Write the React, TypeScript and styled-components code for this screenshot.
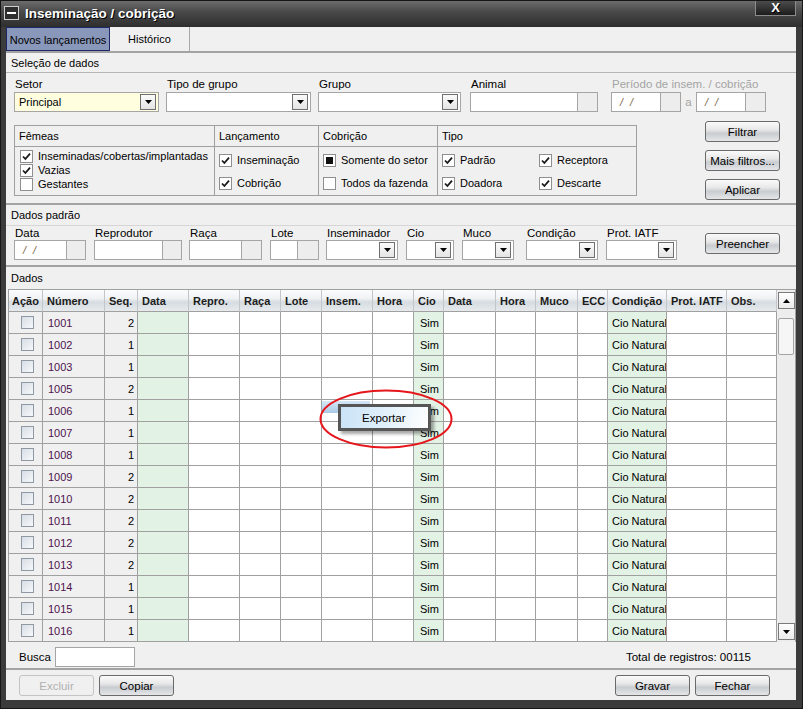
import React from "react";
import styled, { createGlobalStyle, css } from "styled-components";

const GlobalStyle = createGlobalStyle`
  * { box-sizing: border-box; }
  html, body { margin: 0; padding: 0; background: #1e1e1e; }
  body {
    font-family: "Liberation Sans", Arial, sans-serif;
    font-size: 11px;
    color: #000;
  }
`;

const Window = styled.div`
  position: relative;
  width: 803px;
  height: 709px;
  display: flex;
  flex-direction: column;
  border: 1px solid #161616;
  background: #3b3b3b;
  padding-bottom: 8px;
  overflow: hidden;
`;

const TitleBar = styled.div`
  height: 26px;
  flex: none;
  display: flex;
  align-items: flex-start;
  padding-left: 3px;
  background: linear-gradient(180deg, #6c6c6c 0%, #4a4a4a 40%, #2e2e2e 100%);
`;

const MinIcon = styled.div`
  width: 15px;
  height: 14px;
  margin-top: 5px;
  border: 1px solid #cfcfcf;
  background: #2e2e2e;
  display: flex;
  align-items: center;
  justify-content: center;
  &::after {
    content: "";
    width: 9px;
    height: 2px;
    background: #fff;
  }
`;

const Title = styled.div`
  margin-left: 6px;
  margin-top: 5px;
  color: #fff;
  font-size: 13.5px;
  font-weight: bold;
  text-shadow: 1px 1px 0 #000;
`;

const CloseBtn = styled.div`
  margin-left: auto;
  margin-right: 6px;
  width: 41px;
  height: 15px;
  border: 1px solid #8c8c8c;
  border-top: none;
  background: linear-gradient(180deg, #4c4c4c, #1c1c1c);
  color: #fff;
  font-weight: bold;
  font-size: 13px;
  line-height: 14px;
  text-align: center;
  text-shadow: 1px 1px 0 #000;
`;

const Body = styled.div`
  flex: 1;
  margin: 0 6px 0 5px;
  background: #f0f0f0;
  display: flex;
  flex-direction: column;
`;

const TabBar = styled.div`
  height: 26px;
  flex: none;
  display: flex;
  border-bottom: 2px solid #a3a3a3;
`;

const Tab = styled.div<{ $w: number; $active?: boolean }>`
  width: ${(p) => p.$w}px;
  height: 24px;
  display: flex;
  align-items: center;
  justify-content: center;
  ${(p) =>
    p.$active
      ? css`
          background: #8997ba;
          border: 1px solid #1d2868;
          padding-top: 2px;
        `
      : css`
          border-right: 1px solid #a8a8a8;
        `}
`;

const SectionTitle = styled.div<{ $h: number; $line?: string }>`
  height: ${(p) => p.$h}px;
  flex: none;
  display: flex;
  align-items: center;
  padding-left: 5px;
  border-bottom: ${(p) => (p.$line ? `1px solid ${p.$line}` : "none")};
`;

const Separator = styled.div`
  height: 2px;
  flex: none;
  background: #a3a3a3;
`;

const SelPanel = styled.div`
  height: 130px;
  flex: none;
  padding: 4px 16px 0 8px;
  display: flex;
  flex-direction: column;
`;

const FieldRow = styled.div`
  display: flex;
  align-items: flex-start;
`;

const Field = styled.div<{ $w?: number }>`
  width: ${(p) => (p.$w ? `${p.$w}px` : "auto")};
  flex: none;
  display: flex;
  flex-direction: column;
`;

const Label = styled.div<{ $h: number; $disabled?: boolean }>`
  height: ${(p) => p.$h}px;
  line-height: ${(p) => p.$h}px;
  padding-left: 1px;
  font-size: 11.5px;
  color: ${(p) => (p.$disabled ? "#a4a4a4" : "#000")};
`;

const Inline = styled.div`
  display: flex;
  align-items: center;
`;

const Combo = styled.div<{ $w: number; $bg?: string }>`
  width: ${(p) => p.$w}px;
  height: 20px;
  border: 1px solid #a5a5a5;
  background: ${(p) => p.$bg || "#fff"};
  display: flex;
  align-items: center;
  justify-content: space-between;
  padding: 0 1px 0 4px;
`;

const DropBtn = styled.div`
  width: 16px;
  height: 16px;
  border: 1px solid #6f6f6f;
  background: linear-gradient(180deg, #fbfbfb, #e4e4e4);
  display: flex;
  align-items: center;
  justify-content: center;
  margin-right: 1px;
`;

const TextBox = styled.div<{ $w: number }>`
  width: ${(p) => p.$w}px;
  height: 20px;
  border: 1px solid #a5a5a5;
  background: #fff;
  display: flex;
  align-items: center;
  padding-left: 8px;
  color: #7a6448;
  letter-spacing: 2px;
  font-style: italic;
`;

const SideBtn = styled.div<{ $w?: number }>`
  width: ${(p) => p.$w || 20}px;
  height: 20px;
  border: 1px solid #a5a5a5;
  border-left: none;
  background: #ededed;
`;

const ToLabel = styled.div`
  width: 15px;
  text-align: center;
  color: #a4a4a4;
  font-size: 11.5px;
`;

const GroupRow = styled.div`
  display: flex;
  align-items: flex-start;
  margin-top: 9px;
`;

const GroupBox = styled.div`
  margin-top: 4px;
  width: 623px;
  height: 71px;
  border: 1px solid #a0a0a0;
  display: grid;
  grid-template-columns: 200px 104px 119px 1fr;
  grid-template-rows: 21px 1fr;
`;

const GroupHead = styled.div<{ $last?: boolean }>`
  display: flex;
  align-items: center;
  padding-left: 4px;
  border-bottom: 1px solid #a0a0a0;
  border-right: ${(p) => (p.$last ? "none" : "1px solid #a0a0a0")};
`;

const GroupCell = styled.div<{ $gap: number; $top: number; $pad: number; $last?: boolean }>`
  display: flex;
  flex-direction: column;
  gap: ${(p) => p.$gap}px;
  padding: ${(p) => p.$top}px 0 0 ${(p) => p.$pad}px;
  border-right: ${(p) => (p.$last ? "none" : "1px solid #a0a0a0")};
`;

const TipoGrid = styled.div`
  display: grid;
  grid-template-columns: 97px 1fr;
  grid-auto-rows: 13px;
  row-gap: 10px;
  align-content: start;
  padding: 7px 0 0 4px;
`;

const Check = styled.label`
  display: flex;
  align-items: center;
  gap: 5px;
  height: 13px;
  line-height: 13px;
  white-space: nowrap;
`;

const Box = styled.span`
  width: 13px;
  height: 13px;
  flex: none;
  border: 1px solid #8f8f8f;
  background: #fff;
  display: flex;
  align-items: center;
  justify-content: center;
`;

const Dot = styled.span`
  width: 7px;
  height: 7px;
  background: #111;
`;

const SideButtons = styled.div`
  margin-left: auto;
  display: flex;
  flex-direction: column;
  gap: 8px;
`;

const Button = styled.div<{ $disabled?: boolean }>`
  width: 75px;
  height: 21px;
  border: 1px solid ${(p) => (p.$disabled ? "#c4c4c4" : "#6a6a6a")};
  border-radius: 3px;
  display: flex;
  align-items: center;
  justify-content: center;
  font-size: 11.5px;
  ${(p) =>
    p.$disabled
      ? css`
          background: #f0f0f0;
          color: #b0b0b0;
        `
      : css`
          background: linear-gradient(180deg, #fafafa 0%, #e8e8e8 40%, #c9ccd0 60%, #e4e6e8 100%);
          color: #000;
        `}
`;

const DefPanel = styled.div`
  height: 39px;
  flex: none;
  padding: 0 16px 0 8px;
  display: flex;
  align-items: flex-start;
`;

const PushRight = styled.div`
  margin-left: auto;
  margin-top: 7px;
`;

const Table = styled.div`
  position: relative;
  margin-left: 2px;
  width: 788px;
  height: 353px;
  flex: none;
  border-top: 1px solid #a0a0a0;
  border-left: 1px solid #a0a0a0;
  border-right: 1px solid #a0a0a0;
  display: flex;
  overflow: hidden;
`;

const Grid = styled.div`
  width: 768px;
  flex: none;
`;

const Row = styled.div<{ $cols: string }>`
  display: grid;
  grid-template-columns: ${(p) => p.$cols};
  height: 22px;
`;

const HeadCell = styled.div<{ $center?: boolean }>`
  display: flex;
  align-items: center;
  justify-content: ${(p) => (p.$center ? "center" : "flex-start")};
  padding-left: ${(p) => (p.$center ? 0 : 4)}px;
  font-weight: bold;
  color: #1c1c1c;
  border-right: 1px solid #c2c6ca;
  border-bottom: 1px solid #a0a0a0;
  background: linear-gradient(180deg, #fbfcfc 0%, #f0f2f4 40%, #d6dce1 58%, #e6eaed 100%);
  white-space: nowrap;
  overflow: hidden;
`;

const Cell = styled.div<{ $bg: string; $align: string; $pad: number; $color?: string }>`
  display: flex;
  align-items: center;
  justify-content: ${(p) => p.$align};
  padding: 0 ${(p) => (p.$align === "flex-end" ? 3 : 0)}px 0 ${(p) => p.$pad}px;
  background: ${(p) => p.$bg};
  color: ${(p) => p.$color || "#000"};
  border-right: 1px solid #a0a0a0;
  border-bottom: 1px solid #a0a0a0;
  white-space: nowrap;
  overflow: hidden;
`;

const RowCheck = styled.span`
  width: 13px;
  height: 13px;
  border: 1px solid #8e99a4;
  background: linear-gradient(135deg, #d7dee6, #f6f8fa);
`;

const ScrollBar = styled.div`
  width: 18px;
  flex: none;
  background: #ededed;
  display: flex;
  flex-direction: column;
  align-items: center;
  padding: 2px 0 2px 0;
`;

const ScrollArrow = styled.div`
  width: 17px;
  height: 17px;
  border: 1px solid #7a7a7a;
  background: linear-gradient(180deg, #ffffff, #ebebeb);
  display: flex;
  align-items: center;
  justify-content: center;
`;

const Thumb = styled.div`
  width: 16px;
  height: 37px;
  margin-top: 9px;
  border: 1px solid #a3a3a3;
  border-radius: 2px;
  background: #f6f6f6;
`;

const ScrollSpace = styled.div`
  flex: 1;
`;

const SearchRow = styled.div`
  height: 26px;
  flex: none;
  display: flex;
  align-items: flex-start;
  padding: 5px 45px 0 13px;
`;

const SearchLabel = styled.div`
  width: 36px;
  height: 20px;
  line-height: 20px;
  font-size: 11.5px;
`;

const SearchBox = styled.div`
  width: 80px;
  height: 20px;
  border: 1px solid #a5a5a5;
  background: #fff;
`;

const Total = styled.div`
  margin-left: auto;
  height: 20px;
  line-height: 20px;
  font-size: 11.5px;
`;

const ButtonBar = styled.div`
  flex: 1;
  display: flex;
  gap: 5px;
  padding: 5px 26px 0 13px;
`;

const Spacer = styled.div`
  flex: 1;
`;

const Highlight = styled.div`
  position: absolute;
  left: 321px;
  top: 400px;
  width: 48px;
  height: 12px;
  background: linear-gradient(180deg, #d6e7f6, #a9c9e6);
`;

const Menu = styled.div`
  position: absolute;
  left: 337px;
  top: 403px;
  width: 93px;
  height: 27px;
  border: 3px solid #565656;
  background: linear-gradient(100deg, #c9e3f6 0%, #e3f1fb 55%, #ffffff 100%);
  box-shadow: 3px 3px 3px rgba(0, 0, 0, 0.35);
  display: flex;
  align-items: center;
  padding-left: 21px;
  font-size: 11.5px;
`;

const Ellipse = styled.svg`
  position: absolute;
  left: 318px;
  top: 388px;
  overflow: visible;
`;

const Triangle = ({ up = false }: { up?: boolean }) => (
  <svg width="7" height="4" viewBox="0 0 7 4">
    <path d={up ? "M0 4 L3.5 0 L7 4 Z" : "M0 0 L7 0 L3.5 4 Z"} fill="#000" />
  </svg>
);

const Tick = () => (
  <svg width="9" height="9" viewBox="0 0 9 9">
    <path d="M1 4.5 L3.4 7 L8 1.6" fill="none" stroke="#1a1a1a" strokeWidth="1.8" />
  </svg>
);

const CheckItem = ({ label, on, dot }: { label: string; on?: boolean; dot?: boolean }) => (
  <Check>
    <Box>{dot ? <Dot /> : on ? <Tick /> : null}</Box>
    {label}
  </Check>
);

const ComboField = ({ w, bg, value }: { w: number; bg?: string; value?: string }) => (
  <Combo $w={w} $bg={bg}>
    <span>{value}</span>
    <DropBtn>
      <Triangle />
    </DropBtn>
  </Combo>
);

const GREY = "#f0f0f0";
const GREEN = "#e2f2e4";
const WHITE = "#ffffff";

type Col = { title: string; w: number; bg: string; align?: string; pad?: number };

const columns: Col[] = [
  { title: "Ação", w: 34, bg: GREY, align: "center" },
  { title: "Número", w: 62, bg: GREY, pad: 5 },
  { title: "Seq.", w: 33, bg: GREY, align: "flex-end" },
  { title: "Data", w: 51, bg: GREEN },
  { title: "Repro.", w: 51, bg: WHITE },
  { title: "Raça", w: 41, bg: WHITE },
  { title: "Lote", w: 41, bg: WHITE },
  { title: "Insem.", w: 51, bg: WHITE },
  { title: "Hora", w: 41, bg: WHITE },
  { title: "Cio", w: 30, bg: GREEN, pad: 6 },
  { title: "Data", w: 52, bg: WHITE },
  { title: "Hora", w: 40, bg: WHITE },
  { title: "Muco", w: 42, bg: WHITE },
  { title: "ECC", w: 30, bg: WHITE },
  { title: "Condição", w: 59, bg: GREEN, pad: 4 },
  { title: "Prot. IATF", w: 60, bg: WHITE },
  { title: "Obs.", w: 50, bg: WHITE },
];

const colTemplate = columns.map((c) => `${c.w}px`).join(" ");

const rows: [number, number][] = [
  [1001, 2], [1002, 1], [1003, 1], [1005, 2], [1006, 1], [1007, 1], [1008, 1], [1009, 2],
  [1010, 2], [1011, 2], [1012, 2], [1013, 2], [1014, 1], [1015, 1], [1016, 1],
];

const cellContent = (i: number, num: number, seq: number) => {
  if (i === 0) return <RowCheck />;
  if (i === 1) return num;
  if (i === 2) return seq;
  if (i === 9) return "Sim";
  if (i === 14) return "Cio Natural";
  return null;
};

export default function App() {
  return (
    <Window>
      <GlobalStyle />
      <TitleBar>
        <MinIcon />
        <Title>Inseminação / cobrição</Title>
        <CloseBtn>X</CloseBtn>
      </TitleBar>

      <Body>
        <TabBar>
          <Tab $w={104} $active>Novos lançamentos</Tab>
          <Tab $w={80}>Histórico</Tab>
        </TabBar>

        <SectionTitle $h={20} $line="#b5b5b5">Seleção de dados</SectionTitle>
        <SelPanel>
          <FieldRow>
            <Field $w={152}>
              <Label $h={15}>Setor</Label>
              <ComboField w={145} bg="#ffffe0" value="Principal" />
            </Field>
            <Field $w={152}>
              <Label $h={15}>Tipo de grupo</Label>
              <ComboField w={145} />
            </Field>
            <Field $w={152}>
              <Label $h={15}>Grupo</Label>
              <ComboField w={143} />
            </Field>
            <Field $w={141}>
              <Label $h={15}>Animal</Label>
              <Inline>
                <TextBox $w={108} />
                <SideBtn />
              </Inline>
            </Field>
            <Field>
              <Label $h={15} $disabled>Período de insem. / cobrição</Label>
              <Inline>
                <TextBox $w={50}>/ /</TextBox>
                <SideBtn />
                <ToLabel>a</ToLabel>
                <TextBox $w={50}>/ /</TextBox>
                <SideBtn />
              </Inline>
            </Field>
          </FieldRow>

          <GroupRow>
            <GroupBox>
              <GroupHead>Fêmeas</GroupHead>
              <GroupHead>Lançamento</GroupHead>
              <GroupHead>Cobrição</GroupHead>
              <GroupHead $last>Tipo</GroupHead>
              <GroupCell $gap={1} $top={3} $pad={5}>
                <CheckItem label="Inseminadas/cobertas/implantadas" on />
                <CheckItem label="Vazias" on />
                <CheckItem label="Gestantes" />
              </GroupCell>
              <GroupCell $gap={10} $top={7} $pad={4}>
                <CheckItem label="Inseminação" on />
                <CheckItem label="Cobrição" on />
              </GroupCell>
              <GroupCell $gap={10} $top={7} $pad={4}>
                <CheckItem label="Somente do setor" dot />
                <CheckItem label="Todos da fazenda" />
              </GroupCell>
              <TipoGrid>
                <CheckItem label="Padrão" on />
                <CheckItem label="Receptora" on />
                <CheckItem label="Doadora" on />
                <CheckItem label="Descarte" on />
              </TipoGrid>
            </GroupBox>
            <SideButtons>
              <Button>Filtrar</Button>
              <Button>Mais filtros...</Button>
              <Button>Aplicar</Button>
            </SideButtons>
          </GroupRow>
        </SelPanel>

        <Separator />
        <SectionTitle $h={21} $line="#d6d6d6">Dados padrão</SectionTitle>
        <DefPanel>
          <Field $w={80}>
            <Label $h={14}>Data</Label>
            <Inline>
              <TextBox $w={53}>/ /</TextBox>
              <SideBtn $w={19} />
            </Inline>
          </Field>
          <Field $w={95}>
            <Label $h={14}>Reprodutor</Label>
            <Inline>
              <TextBox $w={69} />
              <SideBtn $w={19} />
            </Inline>
          </Field>
          <Field $w={81}>
            <Label $h={14}>Raça</Label>
            <Inline>
              <TextBox $w={53} />
              <SideBtn />
            </Inline>
          </Field>
          <Field $w={56}>
            <Label $h={14}>Lote</Label>
            <Inline>
              <TextBox $w={28} />
              <SideBtn $w={21} />
            </Inline>
          </Field>
          <Field $w={80}>
            <Label $h={14}>Inseminador</Label>
            <ComboField w={72} />
          </Field>
          <Field $w={56}>
            <Label $h={14}>Cio</Label>
            <ComboField w={48} />
          </Field>
          <Field $w={64}>
            <Label $h={14}>Muco</Label>
            <ComboField w={52} />
          </Field>
          <Field $w={80}>
            <Label $h={14}>Condição</Label>
            <ComboField w={72} />
          </Field>
          <Field $w={72}>
            <Label $h={14}>Prot. IATF</Label>
            <ComboField w={71} />
          </Field>
          <PushRight>
            <Button>Preencher</Button>
          </PushRight>
        </DefPanel>

        <Separator />
        <SectionTitle $h={22}>Dados</SectionTitle>
        <Table>
          <Grid>
            <Row $cols={colTemplate}>
              {columns.map((c, i) => (
                <HeadCell key={i} $center={i === 0}>
                  {c.title}
                </HeadCell>
              ))}
            </Row>
            {rows.map(([num, seq]) => (
              <Row key={num} $cols={colTemplate}>
                {columns.map((c, i) => (
                  <Cell
                    key={i}
                    $bg={c.bg}
                    $align={c.align || "flex-start"}
                    $pad={c.pad ?? 4}
                    $color={i === 1 ? "#4e124e" : undefined}
                  >
                    {cellContent(i, num, seq)}
                  </Cell>
                ))}
              </Row>
            ))}
          </Grid>
          <ScrollBar>
            <ScrollArrow>
              <Triangle up />
            </ScrollArrow>
            <Thumb />
            <ScrollSpace />
            <ScrollArrow>
              <Triangle />
            </ScrollArrow>
          </ScrollBar>
        </Table>

        <SearchRow>
          <SearchLabel>Busca</SearchLabel>
          <SearchBox />
          <Total>Total de registros: 00115</Total>
        </SearchRow>
        <Separator />
        <ButtonBar>
          <Button $disabled>Excluir</Button>
          <Button>Copiar</Button>
          <Spacer />
          <Button>Gravar</Button>
          <Button>Fechar</Button>
        </ButtonBar>
      </Body>

      <Highlight />
      <Menu>Exportar</Menu>
      <Ellipse width="136" height="60" viewBox="0 0 136 60">
        <ellipse cx="67" cy="30" rx="65.5" ry="28.5" fill="none" stroke="#e5161c" strokeWidth="2" />
      </Ellipse>
    </Window>
  );
}
